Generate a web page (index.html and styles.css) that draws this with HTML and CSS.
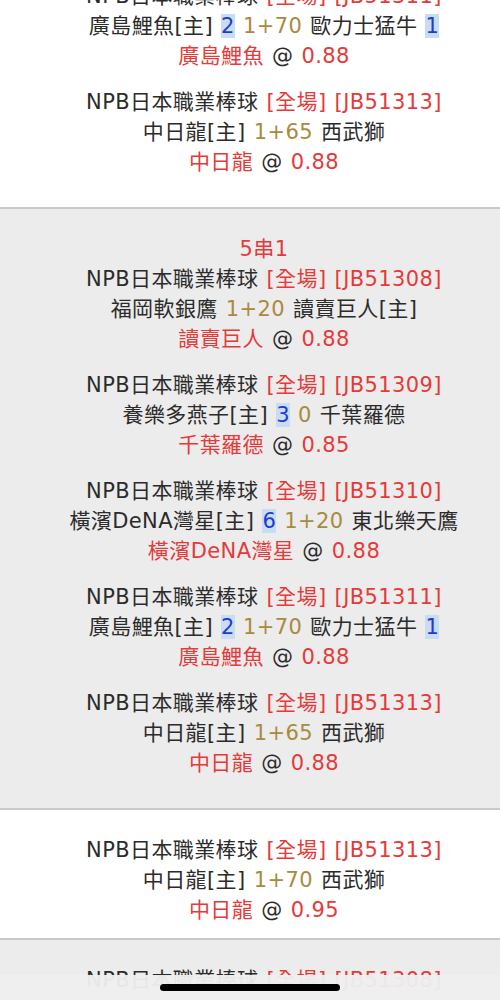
FILE: index.html
```html
<!DOCTYPE html>
<html lang="zh-Hant">
<head>
    <meta charset="UTF-8">
    <meta name="viewport" content="width=device-width, initial-scale=1.0">
    <title>注單明細</title>
    <link rel="stylesheet" href="styles.css">
</head>
<body>
    <div class="bet-list">

        <!-- parlay, scrolled past its first legs -->
        <div class="bet parlay scrolled">
            <div class="leg">
                <div>NPB日本職業棒球 <span class="red">[全場] [JB51311]</span></div>
                <div>廣島鯉魚[主] <span class="score">2</span> <span class="hdp">1+70</span> 歐力士猛牛 <span class="score">1</span></div>
                <div><span class="red">廣島鯉魚</span> @ <span class="red">0.88</span></div>
            </div>
            <div class="leg">
                <div>NPB日本職業棒球 <span class="red">[全場] [JB51313]</span></div>
                <div>中日龍[主] <span class="hdp">1+65</span> 西武獅</div>
                <div><span class="red">中日龍</span> @ <span class="red">0.88</span></div>
            </div>
        </div>

        <div class="bet parlay alt">
            <div class="red">5串1</div>
            <div class="leg">
                <div>NPB日本職業棒球 <span class="red">[全場] [JB51308]</span></div>
                <div>福岡軟銀鷹 <span class="hdp">1+20</span> 讀賣巨人[主]</div>
                <div><span class="red">讀賣巨人</span> @ <span class="red">0.88</span></div>
            </div>
            <div class="leg">
                <div>NPB日本職業棒球 <span class="red">[全場] [JB51309]</span></div>
                <div>養樂多燕子[主] <span class="score">3</span> <span class="hdp">0</span> 千葉羅德</div>
                <div><span class="red">千葉羅德</span> @ <span class="red">0.85</span></div>
            </div>
            <div class="leg">
                <div>NPB日本職業棒球 <span class="red">[全場] [JB51310]</span></div>
                <div>橫濱DeNA灣星[主] <span class="score">6</span> <span class="hdp">1+20</span> 東北樂天鷹</div>
                <div><span class="red">橫濱DeNA灣星</span> @ <span class="red">0.88</span></div>
            </div>
            <div class="leg">
                <div>NPB日本職業棒球 <span class="red">[全場] [JB51311]</span></div>
                <div>廣島鯉魚[主] <span class="score">2</span> <span class="hdp">1+70</span> 歐力士猛牛 <span class="score">1</span></div>
                <div><span class="red">廣島鯉魚</span> @ <span class="red">0.88</span></div>
            </div>
            <div class="leg">
                <div>NPB日本職業棒球 <span class="red">[全場] [JB51313]</span></div>
                <div>中日龍[主] <span class="hdp">1+65</span> 西武獅</div>
                <div><span class="red">中日龍</span> @ <span class="red">0.88</span></div>
            </div>
        </div>

        <div class="bet single">
            <div class="leg">
                <div>NPB日本職業棒球 <span class="red">[全場] [JB51313]</span></div>
                <div>中日龍[主] <span class="hdp">1+70</span> 西武獅</div>
                <div><span class="red">中日龍</span> @ <span class="red">0.95</span></div>
            </div>
        </div>

        <div class="bet single alt">
            <div class="leg">
                <div>NPB日本職業棒球 <span class="red">[全場] [JB51308]</span></div>
                <div>福岡軟銀鷹 <span class="hdp">1+20</span> 讀賣巨人[主]</div>
                <div><span class="red">讀賣巨人</span> @ <span class="red">0.88</span></div>
            </div>
        </div>
    </div>

    <!-- iOS home indicator -->
    <div class="home-bar"><span class="home-pill"></span></div>
</body>
</html>
```

FILE: styles.css
```css
body {
    margin: 0;
    padding: 0;
    font-family: "DejaVu Sans", "Noto Sans CJK TC", sans-serif;
    font-size: 21px;
    line-height: 30px;
    letter-spacing: 0.4px;
    word-spacing: 1px;
    color: #2b2b2b;
    background-color: #fff;
}

.bet-list {
    overflow: hidden;
}

.bet {
    padding: 25px 0 14px 28px;
    text-align: center;
    border-bottom: 2px solid #c9c9c9;
    background-color: #fff;
}

.bet.alt {
    background-color: #ececec;
}

.bet.scrolled {
    padding-top: 0;
}

.bet.scrolled .leg:first-child {
    margin-top: -19px;
}

.parlay .leg {
    margin-bottom: 16px;
}

.single {
    padding-bottom: 13px;
}

.red {
    color: #e53a3a;
}

.hdp {
    color: #a88b3d;
}

.score {
    color: #1f3bd0;
    background-color: #c8dcf2;
}

.home-bar {
    position: fixed;
    left: 0;
    right: 0;
    bottom: 0;
    height: 25px;
    background-color: rgba(238, 238, 238, 0.96);
    display: flex;
    justify-content: center;
    padding-top: 9px;
    box-sizing: border-box;
}

.home-pill {
    width: 180px;
    height: 7px;
    border-radius: 4px;
    background-color: #000;
}
```
